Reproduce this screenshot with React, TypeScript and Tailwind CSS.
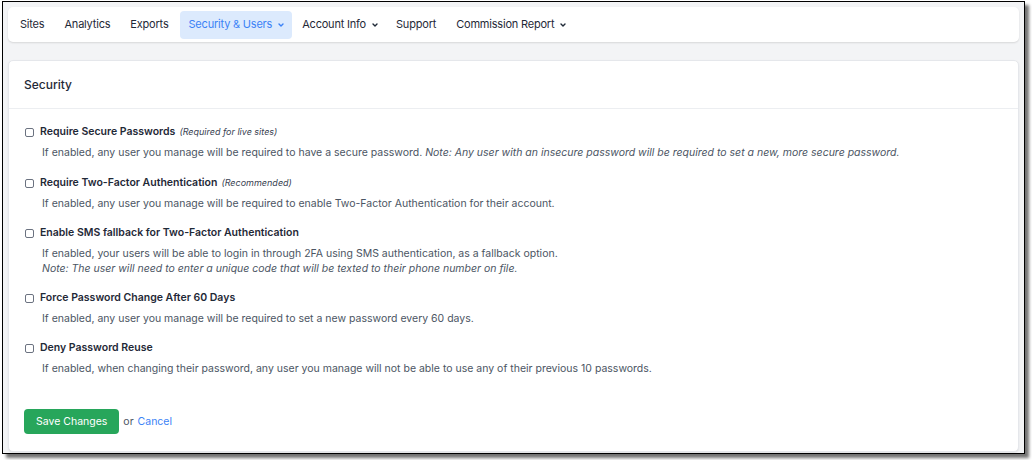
import React from "react";

const Chevron = ({ className = "" }: { className?: string }) => (
  <svg viewBox="0 0 6 6" className={className} width="6" height="6" fill="none" stroke="currentColor" strokeWidth="1.4" strokeLinecap="round" strokeLinejoin="round">
    <path d="M1 2 3 4 5 2" />
  </svg>
);

const NavItem = ({ label, active = false, dropdown = false }: { label: string; active?: boolean; dropdown?: boolean }) => (
  <div
    className={`flex items-center gap-[6px] h-[28px] pl-[9px] ${dropdown ? "pr-[8px]" : "pr-[10px]"} rounded-[4px] text-[11px] tracking-[-0.2px] ${
      active ? "bg-[#dceafd] text-[#3b82f6]" : "text-[#1f2937]"
    }`}
  >
    <span>{label}</span>
    {dropdown && <Chevron className={active ? "text-[#3b82f6]" : "text-[#1f2937]"} />}
  </div>
);

const Row = ({ title, hint, children }: { title: string; hint?: string; children: React.ReactNode }) => (
  <div className="flex flex-col">
    <div className="flex items-center h-[14px]">
      <span className="w-[9px] h-[9px] ml-[1px] rounded-[2px] border border-[#6b7280] bg-white shrink-0" />
      <span className="ml-[6px] text-[10.5px] font-semibold text-[#1f2937]">{title}</span>
      {hint && <span className="ml-[4px] text-[9px] italic text-[#374151]">{hint}</span>}
    </div>
    <div className="mt-[6px] pl-[18px] text-[10.5px] leading-[15px] text-[#4b5563]">{children}</div>
  </div>
);

export default function App() {
  return (
    <div className="w-[1032px] h-[460px] bg-white" style={{ fontFamily: "Inter, 'Noto Sans', sans-serif" }}>
      <div className="ml-[2px] mt-[1px] w-[1023px] h-[453px] border border-black bg-[#f3f4f6] shadow-[4px_4px_3px_rgba(0,0,0,0.55)] flex flex-col px-[5px] pt-[5px] pb-[1px]">
        <div className="h-[35px] bg-white rounded-[5px] shadow-[0_1px_2px_rgba(0,0,0,0.12)] flex items-center pl-[3px] gap-[1px]">
          <NavItem label="Sites" />
          <NavItem label="Analytics" />
          <NavItem label="Exports" />
          <NavItem label="Security & Users" active dropdown />
          <NavItem label="Account Info" dropdown />
          <NavItem label="Support" />
          <NavItem label="Commission Report" dropdown />
        </div>
        <div className="mt-[18px] flex-1 bg-white rounded-[5px] border border-[#e5e7eb] shadow-[0_1px_2px_rgba(0,0,0,0.08)] flex flex-col">
          <div className="h-[48px] flex items-center px-[15px] border-b border-[#eceef1] text-[12px] font-medium text-[#1f2937]">
            Security
          </div>
          <div className="flex flex-col gap-[15px] px-[15px] pt-[16px]">
            <Row title="Require Secure Passwords" hint="(Required for live sites)">
              If enabled, any user you manage will be required to have a secure password.{" "}
              <i>Note: Any user with an insecure password will be required to set a new, more secure password.</i>
            </Row>
            <div className="mt-[1px]">
              <Row title="Require Two-Factor Authentication" hint="(Recommended)">
                If enabled, any user you manage will be required to enable Two-Factor Authentication for their account.
              </Row>
            </div>
            <Row title="Enable SMS fallback for Two-Factor Authentication">
              If enabled, your users will be able to login in through 2FA using SMS authentication, as a fallback option.
              <br />
              <i>Note: The user will need to enter a unique code that will be texted to their phone number on file.</i>
            </Row>
            <Row title="Force Password Change After 60 Days">
              If enabled, any user you manage will be required to set a new password every 60 days.
            </Row>
            <Row title="Deny Password Reuse">
              If enabled, when changing their password, any user you manage will not be able to use any of their previous 10 passwords.
            </Row>
          </div>
          <div className="flex items-center px-[15px] mt-[33px] text-[10.5px]">
            <button className="h-[25px] px-[12px] rounded-[4px] bg-[#27a65b] text-white text-[10.5px]">Save Changes</button>
            <span className="ml-[4px] text-[#4b5563]">or</span>
            <span className="ml-[4px] text-[#3b82f6]">Cancel</span>
          </div>
        </div>
      </div>
    </div>
  );
}
